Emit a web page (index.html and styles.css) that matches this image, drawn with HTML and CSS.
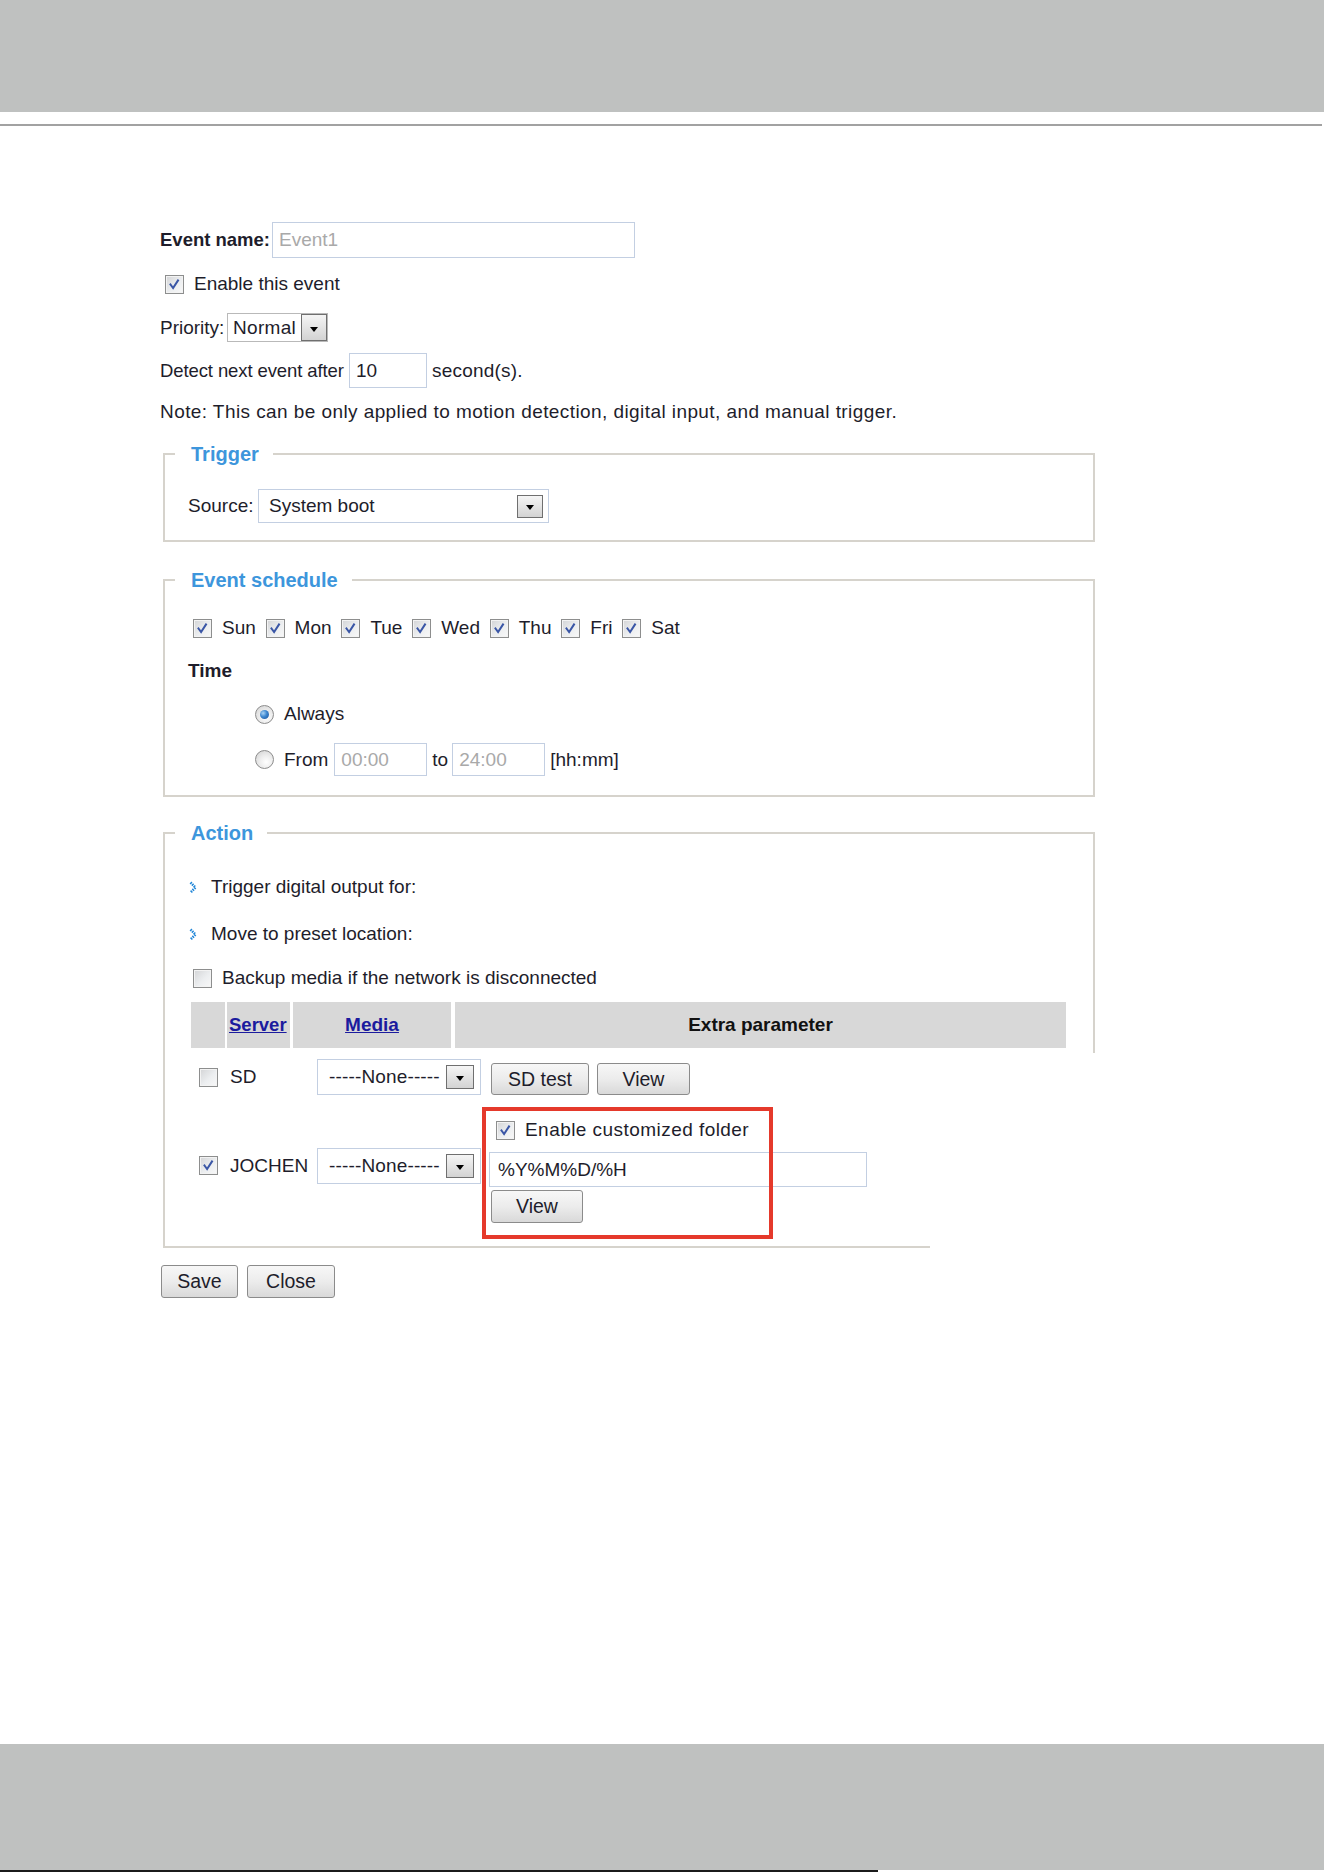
FILE: index.html
```html
<!DOCTYPE html>
<html lang="en">
<head>
<meta charset="utf-8">
<title>Event settings</title>
<link rel="stylesheet" href="styles.css">
</head>
<body>
<div class="page">
  <header class="top-band"></header>
  <div class="top-rule"></div>

  <main class="form">
    <div class="row row-name">
      <label class="lbl lbl-name">Event name:</label>
      <input class="txt-in in-name" type="text" value="Event1">
    </div>

    <div class="row row-enable">
      <span class="cb on"><svg viewBox="0 0 17 17"><path d="M4.5 8.5l2.6 3.6L12 4.5"/></svg></span>
      <span class="after-cb">Enable this event</span>
    </div>

    <div class="row row-priority">
      <span class="lbl-priority">Priority:</span>
      <div class="sel sel-priority"><span>Normal</span><span class="drop"><i class="tri"></i></span></div>
    </div>

    <div class="row row-detect">
      <span class="lbl-detect">Detect next event after</span>
      <input class="txt-in in-detect" type="text" value="10">
      <span class="unit">second(s).</span>
    </div>

    <div class="row row-note">Note: This can be only applied to motion detection, digital input, and manual trigger.</div>

    <fieldset class="box box-trigger">
      <legend>Trigger</legend>
      <div class="box-body trigger-body">
        <div class="row row-source">
          <span class="lbl-source">Source:</span>
          <div class="sel sel-source"><span>System boot</span><span class="drop"><i class="tri"></i></span></div>
        </div>
      </div>
    </fieldset>

    <fieldset class="box box-schedule">
      <legend>Event schedule</legend>
      <div class="box-body schedule-body">
        <div class="row days">
          <span class="day"><span class="cb on"><svg viewBox="0 0 17 17"><path d="M4.5 8.5l2.6 3.6L12 4.5"/></svg></span><span class="after-cb">Sun</span></span>
          <span class="day"><span class="cb on"><svg viewBox="0 0 17 17"><path d="M4.5 8.5l2.6 3.6L12 4.5"/></svg></span><span class="after-cb">Mon</span></span>
          <span class="day"><span class="cb on"><svg viewBox="0 0 17 17"><path d="M4.5 8.5l2.6 3.6L12 4.5"/></svg></span><span class="after-cb">Tue</span></span>
          <span class="day"><span class="cb on"><svg viewBox="0 0 17 17"><path d="M4.5 8.5l2.6 3.6L12 4.5"/></svg></span><span class="after-cb">Wed</span></span>
          <span class="day"><span class="cb on"><svg viewBox="0 0 17 17"><path d="M4.5 8.5l2.6 3.6L12 4.5"/></svg></span><span class="after-cb">Thu</span></span>
          <span class="day"><span class="cb on"><svg viewBox="0 0 17 17"><path d="M4.5 8.5l2.6 3.6L12 4.5"/></svg></span><span class="after-cb">Fri</span></span>
          <span class="day"><span class="cb on"><svg viewBox="0 0 17 17"><path d="M4.5 8.5l2.6 3.6L12 4.5"/></svg></span><span class="after-cb">Sat</span></span>
        </div>
        <div class="row row-time">Time</div>
        <div class="row row-always">
          <span class="rd on"></span>
          <span class="after-rd">Always</span>
        </div>
        <div class="row row-from">
          <span class="rd"></span>
          <span class="after-rd">From</span>
          <input class="txt-in in-time in-from" type="text" value="00:00">
          <span class="to">to</span>
          <input class="txt-in in-time in-to" type="text" value="24:00">
          <span class="fmt">[hh:mm]</span>
        </div>
      </div>
    </fieldset>

    <section class="action">
      <fieldset class="box box-action">
        <legend>Action</legend>
        <div class="box-body action-body">
          <div class="row row-out">
            <svg class="bullet" viewBox="0 0 9 13" width="9" height="13"><path d="M1.5 1.5l5 5-5 5"/></svg>
            <span class="bullet-text">Trigger digital output for:</span>
          </div>
          <div class="row row-preset">
            <svg class="bullet" viewBox="0 0 9 13" width="9" height="13"><path d="M1.5 1.5l5 5-5 5"/></svg>
            <span class="bullet-text">Move to preset location:</span>
          </div>
          <div class="row row-backup">
            <span class="cb"></span>
            <span class="after-cb">Backup media if the network is disconnected</span>
          </div>
          <div class="thead">
            <div class="th th-sel"></div>
            <div class="th th-server"><a href="#">Server</a></div>
            <div class="th th-media"><a href="#">Media</a></div>
            <div class="th th-extra">Extra parameter</div>
          </div>
        </div>
      </fieldset>

      <div class="lower">
        <div class="srv srv-sd">
          <span class="cb"></span>
          <span class="srv-name">SD</span>
          <div class="sel sel-media"><span>-----None-----</span><span class="drop"><i class="tri"></i></span></div>
          <div class="extra extra-sd">
            <button class="btn btn-sdtest" type="button">SD test</button>
            <button class="btn btn-view" type="button">View</button>
          </div>
        </div>

        <div class="srv srv-jochen">
          <span class="cb on"><svg viewBox="0 0 17 17"><path d="M4.5 8.5l2.6 3.6L12 4.5"/></svg></span>
          <span class="srv-name">JOCHEN</span>
          <div class="sel sel-media"><span>-----None-----</span><span class="drop"><i class="tri"></i></span></div>
          <div class="extra extra-jochen">
            <div class="row row-folder">
              <span class="cb on"><svg viewBox="0 0 17 17"><path d="M4.5 8.5l2.6 3.6L12 4.5"/></svg></span>
              <span class="after-cb folder-text">Enable customized folder</span>
            </div>
            <input class="txt-in in-folder" type="text" value="%Y%M%D/%H">
            <button class="btn btn-view2" type="button">View</button>
            <div class="callout"></div>
          </div>
        </div>
      </div>
    </section>

    <div class="actions">
      <button class="btn btn-save" type="button">Save</button>
      <button class="btn btn-close" type="button">Close</button>
    </div>
  </main>

  <footer class="bottom-band">
    <div class="bottom-fill"></div>
    <div class="bottom-edge"></div>
  </footer>
</div>
</body>
</html>
```

FILE: styles.css
```css
* { box-sizing: border-box; }

html, body {
  margin: 0;
  padding: 0;
  background: #fff;
}

body {
  font-family: "Liberation Sans", Arial, sans-serif;
  font-size: 19px;
  color: #1e1d2b;
}

.page {
  height: 1872px;
  display: flex;
  flex-direction: column;
}

/* page chrome */
.top-band {
  flex: none;
  height: 112px;
  background: #bfc1c0;
}

.top-rule {
  flex: none;
  width: 1322px;
  height: 2px;
  margin-top: 12px;
  background: #a2a2a2;
}

.bottom-band {
  flex: none;
  margin-top: auto;
}

.bottom-fill {
  height: 126px;
  background: #bfc1c0;
}

.bottom-edge {
  width: 878px;
  height: 2px;
  background: #1b1b1b;
}

/* form */
.form {
  flex: none;
  padding-left: 160px;
}

.row {
  display: flex;
  align-items: center;
}

.txt-in {
  font-family: "Liberation Sans", Arial, sans-serif;
  font-size: 19px;
  color: #1e1d2b;
  background: #fff;
  border: 1px solid #c3cfe2;
  border-radius: 0;
  padding: 0 6px;
  margin: 0;
  outline: none;
}

.row-name {
  margin-top: 96px;
  height: 36px;
}

.lbl-name {
  width: 112px;
  font-weight: bold;
  font-size: 18.5px;
}

.in-name {
  width: 363px;
  height: 36px;
  color: #a9a9a9;
}

.row-enable {
  margin-top: 12px;
  height: 28px;
}

.row-enable .cb {
  margin-left: 5px;
}

/* checkbox */
.cb {
  flex: none;
  display: inline-flex;
  width: 19px;
  height: 19px;
  border: 1px solid #8d8e8e;
  background: linear-gradient(135deg, #d3d4d6 0%, #eceef0 55%, #f8f8f8 100%);
  box-shadow: inset 0 0 0 1px #f3f3f3;
}

.cb svg {
  width: 100%;
  height: 100%;
}

.cb svg path {
  fill: none;
  stroke: #3a56a6;
  stroke-width: 2;
  stroke-linecap: square;
}

.after-cb {
  margin-left: 10px;
  white-space: nowrap;
}

/* radio */
.rd {
  flex: none;
  position: relative;
  width: 19px;
  height: 19px;
  border-radius: 50%;
  border: 1px solid #8c8c8c;
  background: radial-gradient(circle at 60% 65%, #ffffff 0%, #ececec 45%, #cfcfcf 100%);
}

.rd.on::after {
  content: "";
  position: absolute;
  left: 4px;
  top: 4px;
  width: 9px;
  height: 9px;
  border-radius: 50%;
  background: radial-gradient(circle at 35% 35%, #a9d3f5 0%, #3c86cf 45%, #1a4f96 100%);
}

.after-rd {
  margin-left: 10px;
}

/* select-look fields */
.sel {
  flex: none;
  display: flex;
  align-items: center;
  justify-content: space-between;
  background: #fff;
  border: 1px solid #c3cfe2;
  white-space: nowrap;
}

.drop {
  flex: none;
  display: flex;
  align-items: center;
  justify-content: center;
  width: 26px;
  height: 23px;
  border: 1px solid #6f6f6f;
  background: linear-gradient(#f5f5f5, #d3d3d3);
}

.tri {
  width: 0;
  height: 0;
  border-left: 4.5px solid transparent;
  border-right: 4.5px solid transparent;
  border-top: 5px solid #000;
  margin-top: 3px;
}

.row-priority {
  margin-top: 15px;
  height: 29px;
}

.lbl-priority {
  width: 67px;
}

.sel-priority {
  width: 101px;
  height: 29px;
  padding-left: 5px;
  border-color: #b9b9b9;
  letter-spacing: 0.3px;
}

.sel-priority .drop {
  width: 26px;
  height: 27px;
}

.row-detect {
  margin-top: 11px;
  height: 35px;
}

.lbl-detect {
  width: 189px;
  white-space: nowrap;
  font-size: 18.5px;
  letter-spacing: -0.1px;
}

.in-detect {
  width: 78px;
  height: 35px;
}

.unit {
  margin-left: 5px;
  letter-spacing: 0.2px;
}

.row-note {
  margin-top: 12px;
  height: 24px;
  white-space: nowrap;
  letter-spacing: 0.42px;
}

/* group boxes */
.box {
  display: block;
  width: 932px;
  margin: 0 0 0 3px;
  padding: 0;
  min-width: 0;
  border: 2px solid #d6d3cc;
}

.box legend {
  margin-left: 10px;
  padding: 0 14px 0 16px;
  font-size: 20px;
  line-height: 24px;
  font-weight: bold;
  color: #3d96dc;
}

.box-body {
  padding-left: 23px;
}

.box-trigger {
  margin-top: 18px;
}

.trigger-body {
  padding-top: 23px;
  padding-bottom: 17px;
}

.row-source {
  height: 34px;
}

.lbl-source {
  width: 70px;
}

.sel-source {
  width: 291px;
  height: 34px;
  padding: 0 5px 0 10px;
}

.box-schedule {
  margin-top: 26px;
}

.schedule-body {
  padding-top: 25px;
  padding-bottom: 19px;
}

.days {
  height: 22px;
  margin-left: 5px;
  gap: 9.8px;
}

.day {
  display: inline-flex;
  align-items: center;
}

.row-time {
  margin-top: 21px;
  height: 22px;
  font-weight: bold;
}

.row-always {
  margin-top: 21px;
  height: 22px;
  padding-left: 67px;
}

.row-from {
  margin-top: 18px;
  height: 33px;
  padding-left: 67px;
}

.in-time {
  width: 93px;
  height: 33px;
  color: #a9a9a9;
}

.in-from {
  margin-left: 6px;
}

.to {
  margin-left: 5px;
}

.in-to {
  margin-left: 4px;
}

.fmt {
  margin-left: 5px;
}

/* action group */
.box-action {
  margin-top: 24px;
  border-bottom: none;
}

.action-body {
  padding-top: 31px;
  padding-bottom: 5px;
}

.row-out,
.row-preset,
.row-backup {
  height: 22px;
}

.row-preset {
  margin-top: 25px;
}

.row-backup {
  margin-top: 22px;
}

.row-backup .cb {
  margin-left: 5px;
}

.bullet {
  flex: none;
  margin-left: 1px;
}

.bullet path {
  fill: none;
  stroke: #2287d8;
  stroke-width: 2.6;
  stroke-dasharray: 1.5 0.9;
}

.bullet-text {
  margin-left: 13px;
}

.thead {
  display: flex;
  height: 46px;
  margin-top: 13px;
  margin-left: 3px;
  font-weight: bold;
}

.th {
  display: flex;
  align-items: center;
  background: #d8d8d8;
}

.th a {
  color: #1b1b9e;
  text-decoration: underline;
}

.th-sel { width: 34px; }
.th-server { width: 63px; margin-left: 2px; padding-left: 2px; font-size: 18.5px; }
.th-media { width: 158px; margin-left: 3px; justify-content: center; }
.th-extra { width: 611px; margin-left: 4px; justify-content: center; color: #111; }

.lower {
  width: 767px;
  margin-left: 3px;
  border-left: 2px solid #d6d3cc;
  border-bottom: 2px solid #d6d3cc;
  padding: 6px 0 23px 34px;
}

.srv {
  display: flex;
}

.srv-sd {
  align-items: center;
  height: 36px;
}

.srv-jochen {
  align-items: flex-start;
  margin-top: 23px;
}

.srv-name {
  width: 87px;
  margin-left: 12px;
  line-height: 22px;
}

.sel-media {
  width: 164px;
  height: 36px;
  padding: 0 6px 0 11px;
  letter-spacing: 0.15px;
}

.sel-media .drop {
  height: 24px;
  width: 28px;
}

.extra {
  margin-left: 8px;
}

.extra-sd {
  display: flex;
  align-self: flex-end;
}

.srv-jochen > .cb {
  margin-top: 38px;
}

.srv-jochen > .srv-name {
  margin-top: 37px;
}

.srv-jochen > .sel-media {
  margin-top: 30px;
}

.extra-jochen {
  position: relative;
}

.row-folder {
  height: 24px;
}

.row-folder .cb {
  margin-left: 7px;
}

.folder-text {
  letter-spacing: 0.45px;
}

.in-folder {
  display: block;
  width: 378px;
  height: 35px;
  margin-top: 10px;
  padding-left: 8px;
}

/* red annotation frame around the folder option */
.callout {
  position: absolute;
  left: -7px;
  top: -11px;
  width: 291px;
  height: 132px;
  border: 4px solid #e5392b;
  pointer-events: none;
}

/* buttons */
.btn {
  font-family: "Liberation Sans", Arial, sans-serif;
  font-size: 19.5px;
  color: #1e1d2b;
  border: 1px solid #8b8b8b;
  border-radius: 3px;
  background: linear-gradient(#f7f7f7 0%, #ececec 50%, #d9d9d9 100%);
  padding: 0;
  margin: 0;
  height: 33px;
  line-height: 31px;
  text-align: center;
}

.btn-sdtest {
  width: 98px;
  margin-left: 2px;
  height: 32px;
}

.btn-view {
  width: 93px;
  margin-left: 8px;
  height: 32px;
}

.btn-view2 {
  display: block;
  width: 92px;
  margin-top: 3px;
  margin-left: 2px;
}

.actions {
  display: flex;
  gap: 9px;
  margin-top: 17px;
  margin-left: 1px;
}

.btn-save { width: 77px; }
.btn-close { width: 88px; }
```
